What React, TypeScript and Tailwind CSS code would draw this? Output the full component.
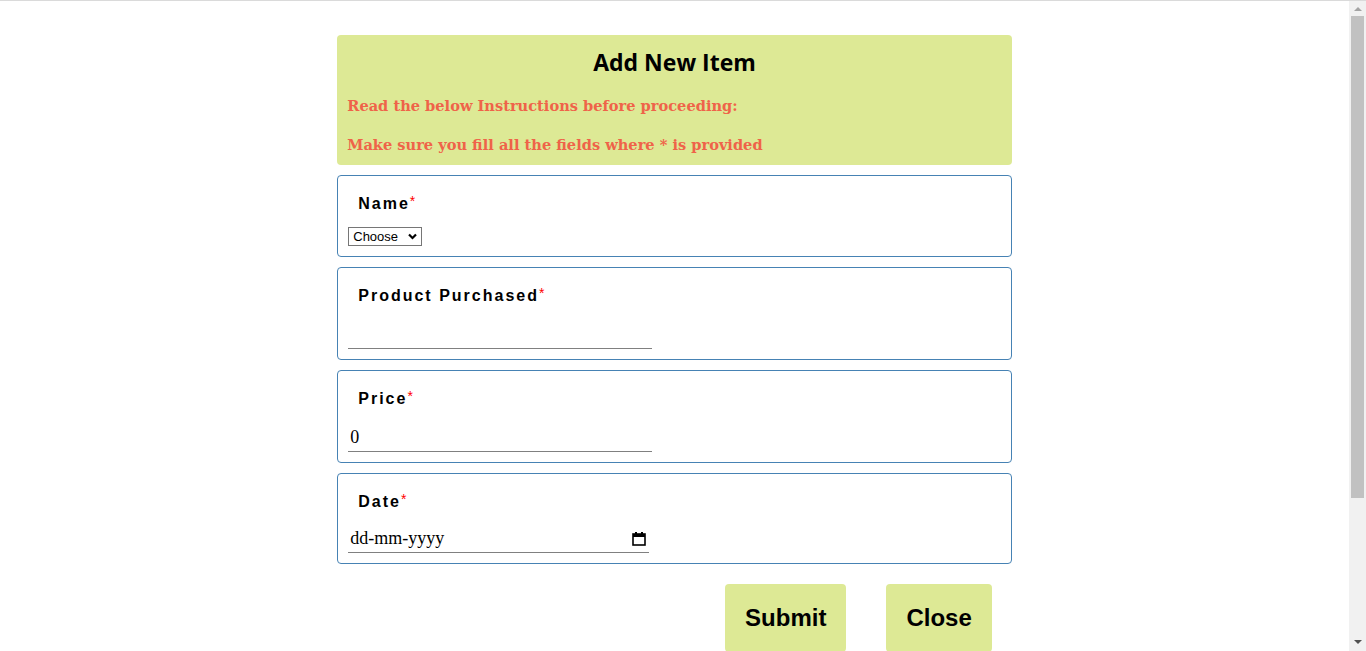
import React from "react";

const serif = { fontFamily: '"DejaVu Serif", Georgia, serif' };
const times = { fontFamily: '"Liberation Serif", "Times New Roman", serif' };

function Label({ text }: { text: string }) {
  return (
    <label className="block ml-[10px] text-[16px] leading-[20px] font-bold tracking-[2px] text-black [font-family:'Liberation_Sans',Arial,sans-serif]">
      {text}
      <span className="relative -top-[3px] text-[#ff0000] text-[14px] font-normal tracking-normal">*</span>
    </label>
  );
}

function Scrollbar() {
  return (
    <div className="w-[17px] shrink-0 bg-[#f1f1f1] flex flex-col">
      <div className="h-[15px] flex items-center justify-center">
        <svg width="8" height="5" viewBox="0 0 8 5">
          <path d="M0 5 L4 1 L8 5 Z" fill="#a3a3a3" />
        </svg>
      </div>
      <div className="flex-1 px-[2px]">
        <div className="h-[482px] bg-[#c1c1c1]" />
      </div>
      <div className="h-[17px] flex items-center justify-center">
        <svg width="8" height="5" viewBox="0 0 8 5">
          <path d="M0 0 L8 0 L4 4 Z" fill="#505050" />
        </svg>
      </div>
    </div>
  );
}

export default function App() {
  return (
    <div className="h-[651px] flex border-t border-[#dadada] bg-white overflow-hidden">
      <div className="flex-1 min-w-0">
        <div className="w-1/2 mx-auto pt-[34px] flex flex-col">
          <div className="bg-[#dde995] rounded-[4px] px-[10px] pt-[13px] pb-[10px]">
            <h2 className="text-center text-[23px] leading-[28px] font-bold text-black [font-family:'Open_Sans',sans-serif]">
              Add New Item
            </h2>
            <p
              className="mt-[20px] text-[14.6px] leading-[20px] font-bold text-[#ef6349]"
              style={serif}
            >
              Read the below Instructions before proceeding:
            </p>
            <p
              className="mt-[19px] text-[14.6px] leading-[20px] font-bold text-[#ef6349]"
              style={serif}
            >
              Make sure you fill all the fields where * is provided
            </p>
          </div>

          <div className="mt-[10px] border border-[#4682b4] rounded-[4px] pl-[10px] pt-[18px] pb-[10px]">
            <Label text="Name" />
            <div className="relative mt-[13px] w-[74px]">
              <select className="block appearance-none h-[19px] w-[74px] border border-[#767676] bg-white pl-[4px] pr-[18px] text-[13px] leading-[17px] text-black [font-family:'Liberation_Sans',Arial,sans-serif]">
                <option>Choose</option>
              </select>
              <svg
                className="pointer-events-none absolute right-[5px] top-[6px]"
                width="9"
                height="7"
                viewBox="0 0 9 7"
              >
                <path d="M1 1.5 L4.5 5 L8 1.5" fill="none" stroke="#000" strokeWidth="2.2" />
              </svg>
            </div>
          </div>

          <div className="mt-[10px] border border-[#4682b4] rounded-[4px] pl-[10px] pt-[18px] pb-[10px]">
            <Label text="Product Purchased" />
            <input
              type="text"
              className="block mt-[14px] h-[29px] w-[304px] border-b border-[#808080] px-[2px] text-[18px] outline-none"
              style={times}
            />
          </div>

          <div className="mt-[10px] border border-[#4682b4] rounded-[4px] pl-[10px] pt-[18px] pb-[10px]">
            <Label text="Price" />
            <input
              type="text"
              defaultValue="0"
              className="block mt-[14px] h-[29px] w-[304px] border-b border-[#808080] px-[2px] text-[18px] text-black outline-none"
              style={times}
            />
          </div>

          <div className="mt-[10px] border border-[#4682b4] rounded-[4px] pl-[10px] pt-[18px] pb-[10px]">
            <Label text="Date" />
            <div className="mt-[12px] h-[29px] w-[301px] border-b border-[#808080] flex items-center justify-between pl-[2px] pr-[3px]">
              <span className="text-[18px] text-black" style={times}>
                dd-mm-yyyy
              </span>
              <svg width="14" height="15" viewBox="0 0 14 15">
                <rect x="1" y="3" width="12" height="11" fill="none" stroke="#000" strokeWidth="1.6" />
                <rect x="1" y="3" width="12" height="3" fill="#000" />
                <rect x="3" y="1" width="2" height="3" fill="#000" />
                <rect x="9" y="1" width="2" height="3" fill="#000" />
              </svg>
            </div>
          </div>

          <div className="mt-[20px] flex justify-end gap-[40px] pr-[20px]">
            <button className="bg-[#dde995] rounded-[4px] px-[20px] py-[20px] text-[24px] leading-[28px] font-bold text-black [font-family:'Liberation_Sans',Arial,sans-serif]">
              Submit
            </button>
            <button className="bg-[#dde995] rounded-[4px] px-[20px] py-[20px] text-[24px] leading-[28px] font-bold text-black [font-family:'Liberation_Sans',Arial,sans-serif]">
              Close
            </button>
          </div>
        </div>
      </div>
      <Scrollbar />
    </div>
  );
}
